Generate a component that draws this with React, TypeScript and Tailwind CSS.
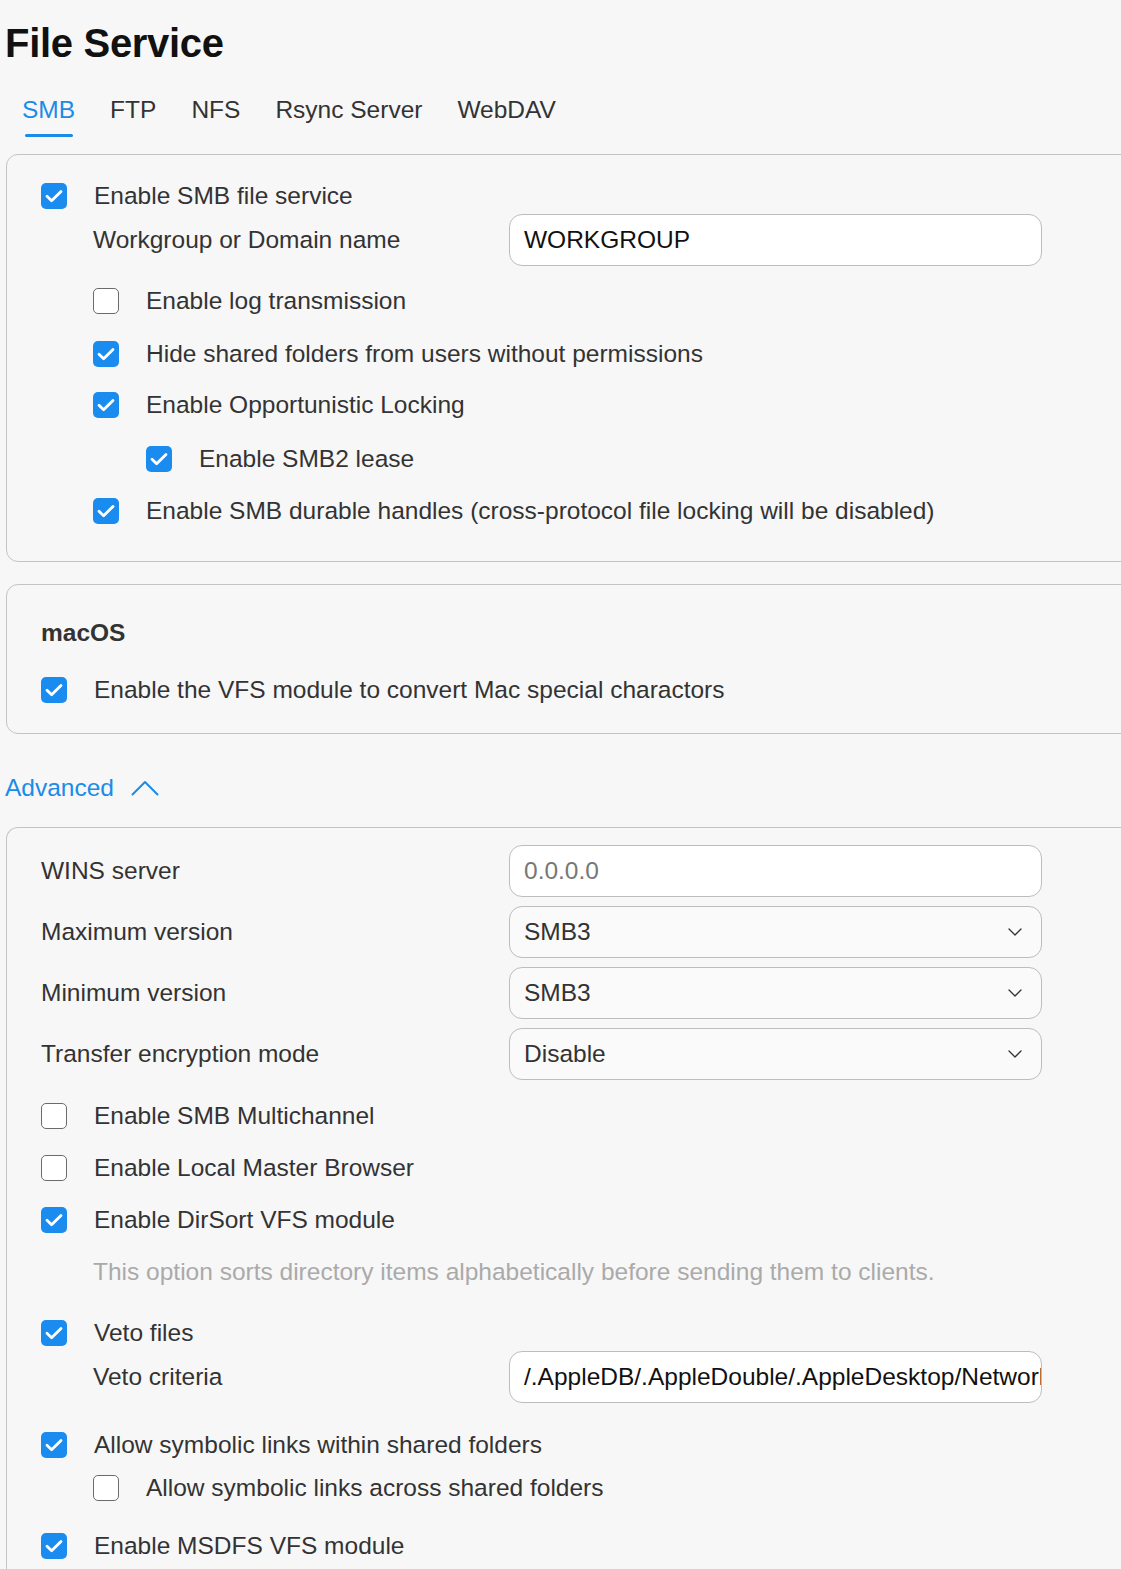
import { ChevronDown } from 'lucide-react';

const font = { fontFamily: '"Liberation Sans", Arial, sans-serif' };

function Box({ checked }: { checked: boolean }) {
  if (checked) {
    return (
      <span className="flex h-[26px] w-[26px] shrink-0 items-center justify-center rounded-[5px] bg-[#1a8cf0]">
        <svg width="22" height="22" viewBox="0 0 22 22" fill="none">
          <path d="M4 11.3l4.6 4.5L18 6.4" stroke="#fff" strokeWidth="2.8" strokeLinecap="round" strokeLinejoin="round" />
        </svg>
      </span>
    );
  }
  return <span className="h-[26px] w-[26px] shrink-0 rounded-[5px] border border-[#6b6b6b] bg-white" />;
}

function Check({ label, checked, indent = 0, mt }: { label: string; checked: boolean; indent?: number; mt: string }) {
  const pad = indent === 0 ? '' : indent === 1 ? 'pl-[52px]' : 'pl-[105px]';
  return (
    <div className={`flex h-[36px] items-center gap-[27px] ${pad} ${mt}`}>
      <Box checked={checked} />
      <span className="text-[24.5px] text-[#333]">{label}</span>
    </div>
  );
}

function Field({ label, value, indent, mt, placeholder }: { label: string; value: string; indent?: boolean; mt: string; placeholder?: boolean }) {
  return (
    <div className={`flex items-center ${mt}`}>
      <div className={`w-[468px] shrink-0 text-[24.5px] text-[#333] ${indent ? 'pl-[52px]' : ''}`}>{label}</div>
      <div className="flex h-[52px] w-[533px] items-center overflow-hidden whitespace-nowrap rounded-[13px] border border-[#bdbdbd] bg-white px-[14px]">
        <span className={`text-[24.5px] ${placeholder ? 'text-[#777]' : 'text-[#111]'}`}>{value}</span>
      </div>
    </div>
  );
}

function Select({ label, value, mt }: { label: string; value: string; mt: string }) {
  return (
    <div className={`flex items-center ${mt}`}>
      <div className="w-[468px] shrink-0 text-[24.5px] text-[#333]">{label}</div>
      <div className="flex h-[52px] w-[533px] items-center justify-between rounded-[13px] border border-[#bdbdbd] bg-[#fafafa] pl-[14px] pr-[14px]">
        <span className="text-[24.5px] text-[#333]">{value}</span>
        <ChevronDown size={24} strokeWidth={1.3} className="text-[#333]" />
      </div>
    </div>
  );
}

export default function App() {
  return (
    <div className="min-h-[1569px] w-[1121px] overflow-hidden bg-[#f7f7f7]" style={font}>
      <h1 className="pl-[5px] pt-[17px] text-[40px] font-bold leading-[52px] tracking-[-0.3px] text-[#111]">File Service</h1>

      <div className="mt-[26px] flex gap-[35px] pl-[22px] text-[24.5px] text-[#333]">
        <div className="flex flex-col items-center">
          <span className="leading-[30px] text-[#1a8ce8]">SMB</span>
          <span className="mt-[9px] h-[3px] w-[48px] rounded-full bg-[#1a8ce8]" />
        </div>
        <span className="leading-[30px]">FTP</span>
        <span className="leading-[30px]">NFS</span>
        <span className="leading-[30px]">Rsync Server</span>
        <span className="leading-[30px]">WebDAV</span>
      </div>

      <div className="ml-[6px] mt-[17px] w-[1135px] rounded-[12px] border border-[#c4c4c4] pb-[32px] pl-[34px] pt-[23px]">
        <Check label="Enable SMB file service" checked mt="" />
        <Field label="Workgroup or Domain name" value="WORKGROUP" indent mt="" />
        <Check label="Enable log transmission" checked={false} indent={1} mt="mt-[17px]" />
        <Check label="Hide shared folders from users without permissions" checked indent={1} mt="mt-[17px]" />
        <Check label="Enable Opportunistic Locking" checked indent={1} mt="mt-[15px]" />
        <Check label="Enable SMB2 lease" checked indent={2} mt="mt-[18px]" />
        <Check label="Enable SMB durable handles (cross-protocol file locking will be disabled)" checked indent={1} mt="mt-[16px]" />
      </div>

      <div className="ml-[6px] mt-[22px] w-[1135px] rounded-[12px] border border-[#c4c4c4] pb-[25px] pl-[34px] pt-[30px]">
        <div className="flex h-[36px] items-center text-[24.5px] font-bold text-[#333]">macOS</div>
        <Check label="Enable the VFS module to convert Mac special charactors" checked mt="mt-[21px]" />
      </div>

      <div className="mt-[36px] flex h-[36px] items-center gap-[17px] pl-[5px] text-[24.5px] text-[#1a8ce8]">
        <span>Advanced</span>
        <svg width="28" height="16" viewBox="0 0 28 16" fill="none">
          <path d="M1.5 14.5L14 2l12.5 12.5" stroke="#1a8ce8" strokeWidth="2" strokeLinecap="round" strokeLinejoin="round" />
        </svg>
      </div>

      <div className="ml-[6px] mt-[21px] w-[1135px] rounded-t-[12px] border border-b-0 border-[#c4c4c4] pb-[20px] pl-[34px] pt-[17px]">
        <Field label="WINS server" value="0.0.0.0" placeholder mt="" />
        <Select label="Maximum version" value="SMB3" mt="mt-[9px]" />
        <Select label="Minimum version" value="SMB3" mt="mt-[9px]" />
        <Select label="Transfer encryption mode" value="Disable" mt="mt-[9px]" />
        <Check label="Enable SMB Multichannel" checked={false} mt="mt-[18px]" />
        <Check label="Enable Local Master Browser" checked={false} mt="mt-[16px]" />
        <Check label="Enable DirSort VFS module" checked mt="mt-[16px]" />
        <div className="mt-[16px] flex h-[36px] items-center pl-[52px] text-[24.5px] text-[#aaa]">
          This option sorts directory items alphabetically before sending them to clients.
        </div>
        <Check label="Veto files" checked mt="mt-[25px]" />
        <Field label="Veto criteria" value="/.AppleDB/.AppleDouble/.AppleDesktop/Network Trash Folder/" indent mt="" />
        <Check label="Allow symbolic links within shared folders" checked mt="mt-[24px]" />
        <Check label="Allow symbolic links across shared folders" checked={false} indent={1} mt="mt-[7px]" />
        <Check label="Enable MSDFS VFS module" checked mt="mt-[22px]" />
      </div>
    </div>
  );
}
